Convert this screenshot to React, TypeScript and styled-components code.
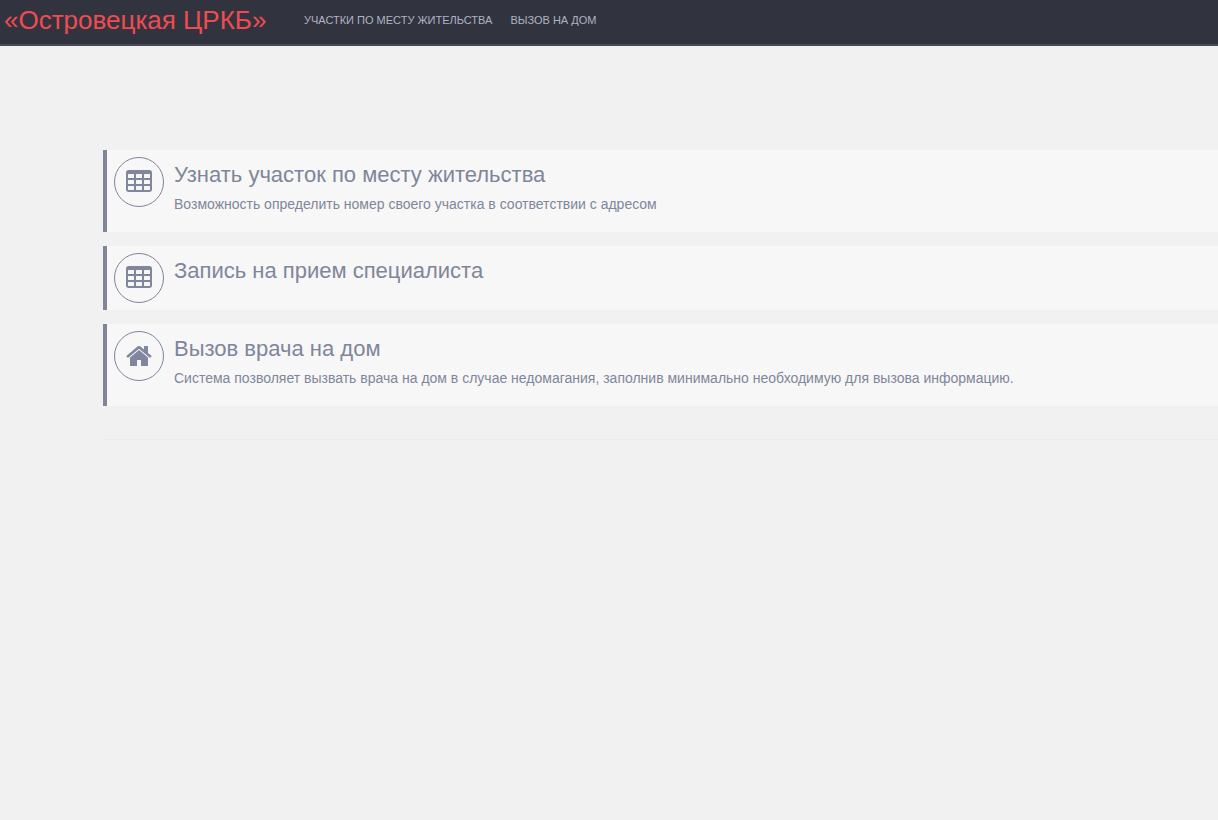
import React from "react";
import styled, { createGlobalStyle } from "styled-components";

const GlobalStyle = createGlobalStyle`
  * { box-sizing: border-box; }
  body {
    margin: 0;
    background: #f1f1f1;
    color: #7f869a;
    font-family: "Liberation Sans", Arial, sans-serif;
    font-size: 14px;
    line-height: 20px;
  }
`;

const Navbar = styled.header`
  display: flex;
  align-items: flex-start;
  height: 46px;
  padding-left: 4px;
  background: #31343f;
  border-bottom: 2px solid #464a56;
`;

const Brand = styled.a`
  flex: none;
  width: 300px;
  color: #f04b52;
  font-size: 26px;
  line-height: 40px;
  text-decoration: none;
  white-space: nowrap;
`;

const Menu = styled.nav`
  display: flex;
  gap: 18px;
`;

const MenuLink = styled.a`
  color: #b0b2c4;
  font-size: 11px;
  line-height: 40px;
  text-decoration: none;
  text-transform: uppercase;
  white-space: nowrap;
`;

const Content = styled.main`
  margin: 104px 0 0 103px;
`;

const Services = styled.section`
  display: flex;
  flex-direction: column;
  gap: 14px;
  padding-bottom: 33px;
  border-bottom: 1px solid #ececec;
`;

const Service = styled.a`
  display: flex;
  align-items: flex-start;
  gap: 10px;
  padding: 7px;
  border-left: 4px solid #7f869a;
  background: #f7f7f7;
  color: inherit;
  text-decoration: none;
`;

const IconCircle = styled.span`
  display: flex;
  flex: none;
  align-items: center;
  justify-content: center;
  width: 50px;
  height: 50px;
  border: 1px solid #7f839c;
  border-radius: 50%;
  color: #7f869e;
`;

const Icon = styled.svg`
  width: 26px;
  height: 28px;
  fill: currentColor;
`;

const Title = styled.h2`
  margin: 0;
  font-size: 22px;
  font-weight: normal;
  line-height: 36px;
`;

const Description = styled.p`
  margin: 1px 0 11px;
`;

const cell = (x: number, y: number) =>
  `M${x + 32} ${y}h320q32 0 32 32v192q0 32-32 32h-320q-32 0-32-32v-192q0-32 32-32z`;

const tablePath = [
  "M160 128h1344q66 0 113 47t47 113v1088q0 66-47 113t-113 47h-1344q-66 0-113-47t-47-113v-1088q0-66 47-113t113-47z",
  ...[384, 768, 1152].flatMap((y) => [128, 640, 1152].map((x) => cell(x, y))),
].join("");

const homePath =
  "M1408 992v480q0 26-19 45t-45 19h-384v-384h-256v384h-384q-26 0-45-19t-19-45v-480q0-1 .5-3t.5-3l575-474 575 474q1 2 1 6zm223-69l-62 74q-8 9-21 11h-3q-13 0-21-7l-692-577-692 577q-12 8-24 7-13-2-21-11l-62-74q-8-10-7-23.5t11-21.5l719-599q32-26 76-26t76 26l244 204v-195q0-14 9-23t23-9h192q14 0 23 9t9 23v408l219 182q10 8 11 21.5t-7 23.5z";

const services = [
  {
    title: "Узнать участок по месту жительства",
    text: "Возможность определить номер своего участка в соответствии с адресом",
    icon: tablePath,
  },
  { title: "Запись на прием специалиста", icon: tablePath },
  {
    title: "Вызов врача на дом",
    text: "Система позволяет вызвать врача на дом в случае недомагания, заполнив минимально необходимую для вызова информацию.",
    icon: homePath,
  },
];

export default function App() {
  return (
    <>
      <GlobalStyle />
      <Navbar>
        <Brand href="#">«Островецкая ЦРКБ»</Brand>
        <Menu>
          <MenuLink href="#areas">Участки по месту жительства</MenuLink>
          <MenuLink href="#home-visit">Вызов на дом</MenuLink>
        </Menu>
      </Navbar>
      <Content>
        <Services>
          {services.map(({ title, text, icon }) => (
            <Service href="#" key={title}>
              <IconCircle>
                <Icon viewBox="0 0 1664 1792" aria-hidden="true">
                  <path fillRule="evenodd" d={icon} />
                </Icon>
              </IconCircle>
              <div>
                <Title>{title}</Title>
                {text && <Description>{text}</Description>}
              </div>
            </Service>
          ))}
        </Services>
      </Content>
    </>
  );
}
